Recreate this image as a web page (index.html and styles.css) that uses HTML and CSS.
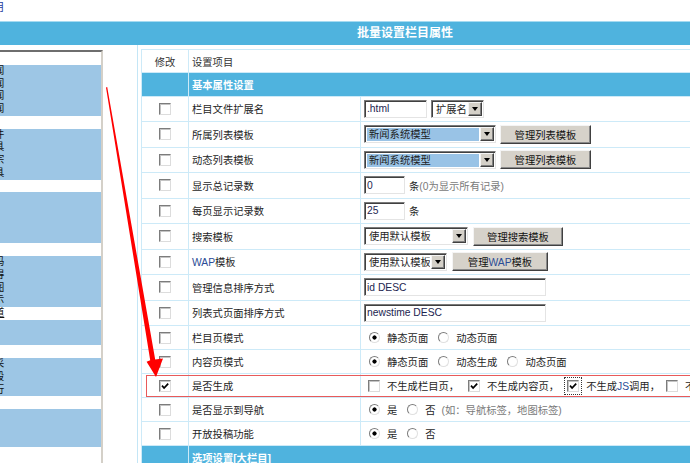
FILE: index.html
```html
<!DOCTYPE html>
<html lang="zh-CN">
<head>
    <meta charset="UTF-8">
    <meta name="viewport" content="width=device-width, initial-scale=1.0">
    <title>批量设置栏目属性</title>
    <link rel="stylesheet" href="styles.css">
</head>
<body>
<div class="page">
    <div class="topbar"><a href="#">用</a></div>
    <div class="title-bar">批量设置栏目属性</div>

    <div class="main">
        <!-- 栏目列表（多选） -->
        <div class="side">
            <div class="listbox">
                <div class="opt"></div>
                <div class="opt on">闻</div>
                <div class="opt on">闻</div>
                <div class="opt on">闻</div>
                <div class="opt on">闻</div>
                <div class="opt"></div>
                <div class="opt on">件</div>
                <div class="opt on">具</div>
                <div class="opt on">宗</div>
                <div class="opt on">具</div>
                <div class="opt"></div>
                <div class="opt on"></div>
                <div class="opt on"></div>
                <div class="opt on"></div>
                <div class="opt on"></div>
                <div class="opt"></div>
                <div class="opt on">码</div>
                <div class="opt on">得</div>
                <div class="opt on">图</div>
                <div class="opt on">示</div>
                <div class="opt focus">道</div>
                <div class="opt on"></div>
                <div class="opt on"></div>
                <div class="opt"></div>
                <div class="opt on">采</div>
                <div class="opt on">段</div>
                <div class="opt on">行</div>
                <div class="opt"></div>
                <div class="opt on"></div>
                <div class="opt on"></div>
                <div class="opt on"></div>
                <div class="opt"></div>
            </div>
        </div>

        <!-- 属性设置 -->
        <div class="content">
            <table class="form">
                <colgroup><col class="c1"><col class="c2"><col></colgroup>
                <tr class="head">
                    <td class="chk">修改</td>
                    <td colspan="2">设置项目</td>
                </tr>
                <tr class="section">
                    <td></td>
                    <td colspan="2">基本属性设置</td>
                </tr>
                <tr class="ri">
                    <td class="chk"><span class="cb"></span></td>
                    <td>栏目文件扩展名</td>
                    <td><div class="ctl">
                        <input class="txt w63" type="text" value=".html">
                        <span class="sel w53 ml4"><span class="sel-text">扩展名</span><span class="sel-btn"></span></span>
                    </div></td>
                </tr>
                <tr class="ri">
                    <td class="chk"><span class="cb"></span></td>
                    <td>所属列表模板</td>
                    <td><div class="ctl">
                        <span class="sel w132 hl"><span class="sel-text">新闻系统模型</span><span class="sel-btn"></span></span>
                        <button class="btn w91 ml4">管理列表模板</button>
                    </div></td>
                </tr>
                <tr class="ri">
                    <td class="chk"><span class="cb"></span></td>
                    <td>动态列表模板</td>
                    <td><div class="ctl">
                        <span class="sel w132 hl"><span class="sel-text">新闻系统模型</span><span class="sel-btn"></span></span>
                        <button class="btn w91 ml4">管理列表模板</button>
                    </div></td>
                </tr>
                <tr class="ri">
                    <td class="chk"><span class="cb"></span></td>
                    <td>显示总记录数</td>
                    <td><div class="ctl">
                        <input class="txt w41" type="text" value="0">
                        <span class="ml4">条</span><span class="note">(0为显示所有记录)</span>
                    </div></td>
                </tr>
                <tr class="ri">
                    <td class="chk"><span class="cb"></span></td>
                    <td>每页显示记录数</td>
                    <td><div class="ctl">
                        <input class="txt w41" type="text" value="25">
                        <span class="ml4">条</span>
                    </div></td>
                </tr>
                <tr class="ri">
                    <td class="chk"><span class="cb"></span></td>
                    <td>搜索模板</td>
                    <td><div class="ctl">
                        <span class="sel w104"><span class="sel-text">使用默认模板</span><span class="sel-btn"></span></span>
                        <button class="btn w90 ml5">管理搜索模板</button>
                    </div></td>
                </tr>
                <tr class="ri">
                    <td class="chk"><span class="cb"></span></td>
                    <td><span class="en">WAP</span>模板</td>
                    <td><div class="ctl">
                        <span class="sel w83"><span class="sel-text">使用默认模板</span><span class="sel-btn"></span></span>
                        <button class="btn w96 ml5">管理<span class="en">WAP</span>模板</button>
                    </div></td>
                </tr>
                <tr class="ri">
                    <td class="chk"><span class="cb"></span></td>
                    <td>管理信息排序方式</td>
                    <td><div class="ctl">
                        <input class="txt w182" type="text" value="id DESC">
                    </div></td>
                </tr>
                <tr class="ri">
                    <td class="chk"><span class="cb"></span></td>
                    <td>列表式页面排序方式</td>
                    <td><div class="ctl">
                        <input class="txt w182" type="text" value="newstime DESC">
                    </div></td>
                </tr>
                <tr class="rr">
                    <td class="chk"><span class="cb"></span></td>
                    <td>栏目页模式</td>
                    <td><div class="ctl">
                        <span class="rd on"></span><span class="lbl">静态页面</span>
                        <span class="rd"></span><span class="lbl">动态页面</span>
                    </div></td>
                </tr>
                <tr class="rr">
                    <td class="chk"><span class="cb"></span></td>
                    <td>内容页模式</td>
                    <td><div class="ctl">
                        <span class="rd on"></span><span class="lbl">静态页面</span>
                        <span class="rd"></span><span class="lbl">动态生成</span>
                        <span class="rd"></span><span class="lbl">动态页面</span>
                    </div></td>
                </tr>
                <tr class="rr">
                    <td class="chk"><span class="cb on"><svg viewBox="0 0 10 10"><path d="M2 4.6 L4.1 7 L8.2 2.6"/></svg></span></td>
                    <td>是否生成</td>
                    <td><div class="ctl">
                        <span class="cb ml4"></span><span class="lbl">不生成栏目页，</span>
                        <span class="cb ml9 on"><svg viewBox="0 0 10 10"><path d="M2 4.6 L4.1 7 L8.2 2.6"/></svg></span><span class="lbl">不生成内容页，</span>
                        <span class="focus-box"><span class="cb on"><svg viewBox="0 0 10 10"><path d="M2 4.6 L4.1 7 L8.2 2.6"/></svg></span></span><span class="lbl l4">不生成<span class="en">JS</span>调用，</span>
                        <span class="cb ml6"></span><span class="lbl">不生成相关链接</span>
                    </div></td>
                </tr>
                <tr class="rr">
                    <td class="chk"><span class="cb"></span></td>
                    <td>是否显示到导航</td>
                    <td><div class="ctl">
                        <span class="rd on"></span><span class="lbl">是</span>
                        <span class="rd"></span><span class="lbl">否</span>
                        <span class="note ml6">(如：导航标签，地图标签)</span>
                    </div></td>
                </tr>
                <tr class="rr">
                    <td class="chk"><span class="cb"></span></td>
                    <td>开放投稿功能</td>
                    <td><div class="ctl">
                        <span class="rd on"></span><span class="lbl">是</span>
                        <span class="rd"></span><span class="lbl">否</span>
                    </div></td>
                </tr>
                <tr class="section">
                    <td></td>
                    <td colspan="2">选项设置[大栏目]</td>
                </tr>
            </table>
        </div>
    </div>

    <!-- 标注 -->
    <div class="mark"></div>
    <svg class="arrow" width="690" height="463" viewBox="0 0 690 463">
        <polygon points="106,87.4 107.2,87 155.2,359.4 163,358.4 156,377 146.6,361.8 150.2,360.3" fill="#f00"/>
    </svg>
</div>
</body>
</html>
```

FILE: styles.css
```css
* {
    margin: 0;
    padding: 0;
    box-sizing: border-box;
}

html, body {
    overflow: hidden;
}

body {
    background: #fff;
    color: #1e1e1e;
    font-family: "Liberation Sans", "Noto Sans CJK SC", sans-serif;
    font-size: 10.3px;
}

.page {
    position: relative;
    width: 810px;
    height: 463px;
}

.topbar {
    height: 21px;
    padding-top: 1px;
    font-size: 11px;
    line-height: 13px;
    text-indent: -7px;
}

.topbar a {
    color: #1d3c9c;
    text-decoration: none;
}

.title-bar {
    height: 24px;
    border-top: 1px solid #a6dbf1;
    background: #4fb3de;
    color: #fff;
    font-size: 12px;
    font-weight: bold;
    line-height: 23px;
    text-align: center;
}

.main {
    display: flex;
    height: 418px;
}

/* 左侧栏目列表 */
.side {
    width: 137px;
    flex-shrink: 0;
}

.listbox {
    width: 103px;
    height: 413px;
    margin-top: 5px;
    border-top: 2px solid #6e6e6e;
    border-right: 2px solid #d4d0c8;
    overflow: hidden;
}

.opt {
    height: 12.75px;
    line-height: 12.75px;
    text-indent: -6px;
    color: #111;
    white-space: nowrap;
}

.opt.on {
    background: #9dc6e5;
}

.opt.focus {
    text-decoration: underline;
}

/* 右侧设置表格 */
.content {
    flex: 1;
    border-left: 1px solid #c4e6f6;
    padding: 4px 0 0 3px;
    overflow: hidden;
}

.form {
    width: 660px;
    border-collapse: collapse;
    table-layout: fixed;
    border: 1px solid #a9d9f0;
}

.form col.c1 {
    width: 47px;
}

.form col.c2 {
    width: 172px;
}

.form td {
    border: 1px solid #cdeaf8;
    padding: 0 2px 0 3px;
    vertical-align: middle;
    white-space: nowrap;
}

.form td.chk {
    text-align: center;
    padding: 0;
}

.form .head td {
    height: 23px;
    color: #333;
}

.form .section td {
    height: 23.5px;
    background: #4fb3de;
    color: #fff;
    font-weight: bold;
}

.form .ri td {
    height: 25.5px;
}

.form .rr td {
    height: 24px;
}

.ctl {
    display: flex;
    align-items: center;
}

.en {
    color: #2b4c96;
}

.note {
    color: #7a7a7a;
}

.lbl {
    margin-left: 7px;
}

.lbl.l4 {
    margin-left: 4px;
}

.ml4 { margin-left: 4px; }
.ml5 { margin-left: 5px; }
.ml6 { margin-left: 6px; }
.ml9 { margin-left: 9px; }

/* 表单控件（Windows 经典样式） */
.txt {
    height: 18px;
    padding: 0 2px;
    border: 1px solid;
    border-color: #7a7a7a #e4e4e4 #e4e4e4 #7a7a7a;
    box-shadow: inset 1px 1px 0 #404040;
    font: inherit;
    color: #1c2550;
    background: #fff;
    outline: none;
}

.w41 { width: 41px; }
.w53 { width: 53px; }
.w63 { width: 63px; }
.w83 { width: 83px; }
.w90 { width: 90px; }
.w91 { width: 91px; }
.w96 { width: 96px; }
.w104 { width: 104px; }
.w132 { width: 132px; }
.w182 { width: 182px; }

.sel {
    display: inline-flex;
    height: 18px;
    padding: 1px;
    border: 1px solid;
    border-color: #7a7a7a #e4e4e4 #e4e4e4 #7a7a7a;
    box-shadow: inset 1px 1px 0 #404040;
    background: #fff;
    flex-shrink: 0;
}

.sel-text {
    flex: 1;
    padding-left: 2px;
    margin: 1px 1px 0 1px;
    line-height: 14px;
    overflow: hidden;
    white-space: nowrap;
}

.sel.hl .sel-text {
    background: #99c3e6;
}

.sel-btn {
    display: flex;
    align-items: center;
    justify-content: center;
    width: 14px;
    background: #d4d0c8;
    border: 1px solid;
    border-color: #f4f4f4 #404040 #404040 #f4f4f4;
    box-shadow: inset -1px -1px 0 #808080;
}

.sel-btn::after {
    content: "";
    border-left: 3.5px solid transparent;
    border-right: 3.5px solid transparent;
    border-top: 4px solid #000;
}

.btn {
    height: 19px;
    background: #d6d2ca;
    border: 1px solid;
    border-color: #f4f4f4 #404040 #404040 #f4f4f4;
    box-shadow: inset -1px -1px 0 #8a8a8a;
    font: inherit;
    color: #111;
    flex-shrink: 0;
}

.cb {
    display: inline-flex;
    align-items: center;
    justify-content: center;
    width: 12px;
    height: 12px;
    border: 1px solid;
    border-color: #7c7c7c #dcdcdc #dcdcdc #7c7c7c;
    box-shadow: inset 1px 1px 0 #c4c4c4;
    background: #fff;
    vertical-align: middle;
    flex-shrink: 0;
}

.cb svg {
    width: 10px;
    height: 10px;
}

.cb path {
    fill: none;
    stroke: #000;
    stroke-width: 1.7;
}

.focus-box {
    display: inline-flex;
    margin-left: 5px;
    padding: 2px;
    border: 1px dotted #333;
}

.rd {
    display: inline-block;
    width: 11px;
    height: 11px;
    margin-left: 10px;
    border-radius: 50%;
    border: 1px solid;
    border-color: #7c7c7c #e0e0e0 #e0e0e0 #7c7c7c;
    background: #fff;
    flex-shrink: 0;
}

.ctl .rd:first-child {
    margin-left: 5px;
}

.rd.on {
    background: radial-gradient(circle, #000 0, #000 1.8px, #fff 2.4px);
}

/* 标注：红框与箭头 */
.mark {
    position: absolute;
    left: 146px;
    top: 375px;
    width: 600px;
    height: 22px;
    border: 1px solid #e85a5a;
    pointer-events: none;
}

.arrow {
    position: absolute;
    left: 0;
    top: 0;
    pointer-events: none;
}
```
